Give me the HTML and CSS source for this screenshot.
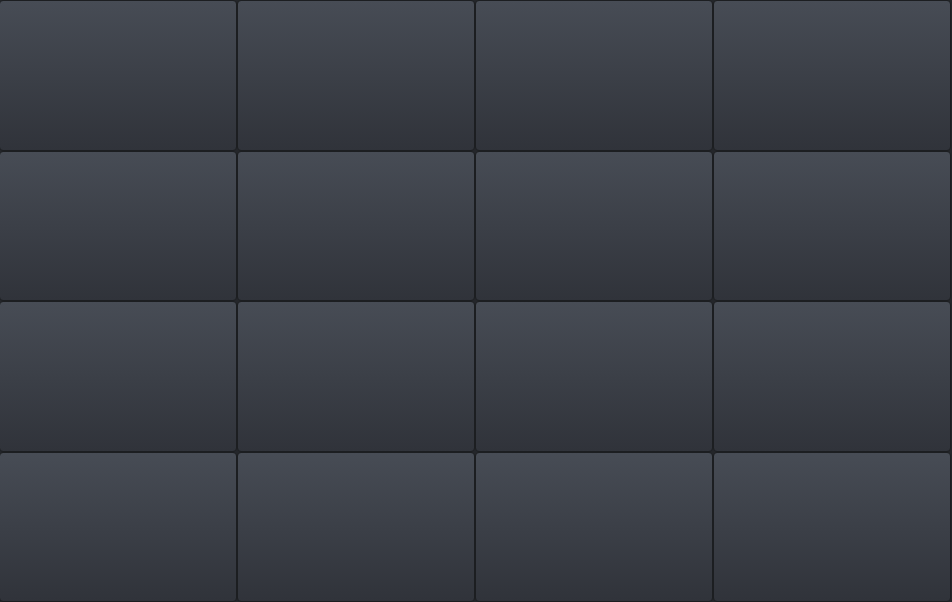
FILE: index.html
```html
<!DOCTYPE html>
<html>
<head>
<meta charset="utf-8">
<link rel="stylesheet" href="styles.css">
</head>
<body>
<div class="grid">
<div class="tile"></div><div class="tile"></div><div class="tile"></div><div class="tile"></div>
<div class="tile"></div><div class="tile"></div><div class="tile"></div><div class="tile"></div>
<div class="tile"></div><div class="tile"></div><div class="tile"></div><div class="tile"></div>
<div class="tile"></div><div class="tile"></div><div class="tile"></div><div class="tile"></div>
</div>
</body>
</html>
```
FILE: styles.css
```css
html, body {
  margin: 0;
  padding: 0;
  background: #24262a;
  overflow: hidden;
}
.grid {
  width: 952px;
  height: 602px;
  margin-left: -1px;
  display: grid;
  grid-template-columns: repeat(4, 1fr);
  grid-template-rows: repeat(4, 1fr);
}
.tile {
  box-sizing: border-box;
  border: 1px solid #1c1e21;
  border-radius: 4px;
  background: linear-gradient(to bottom, #474c55, #30333a);
}
```
